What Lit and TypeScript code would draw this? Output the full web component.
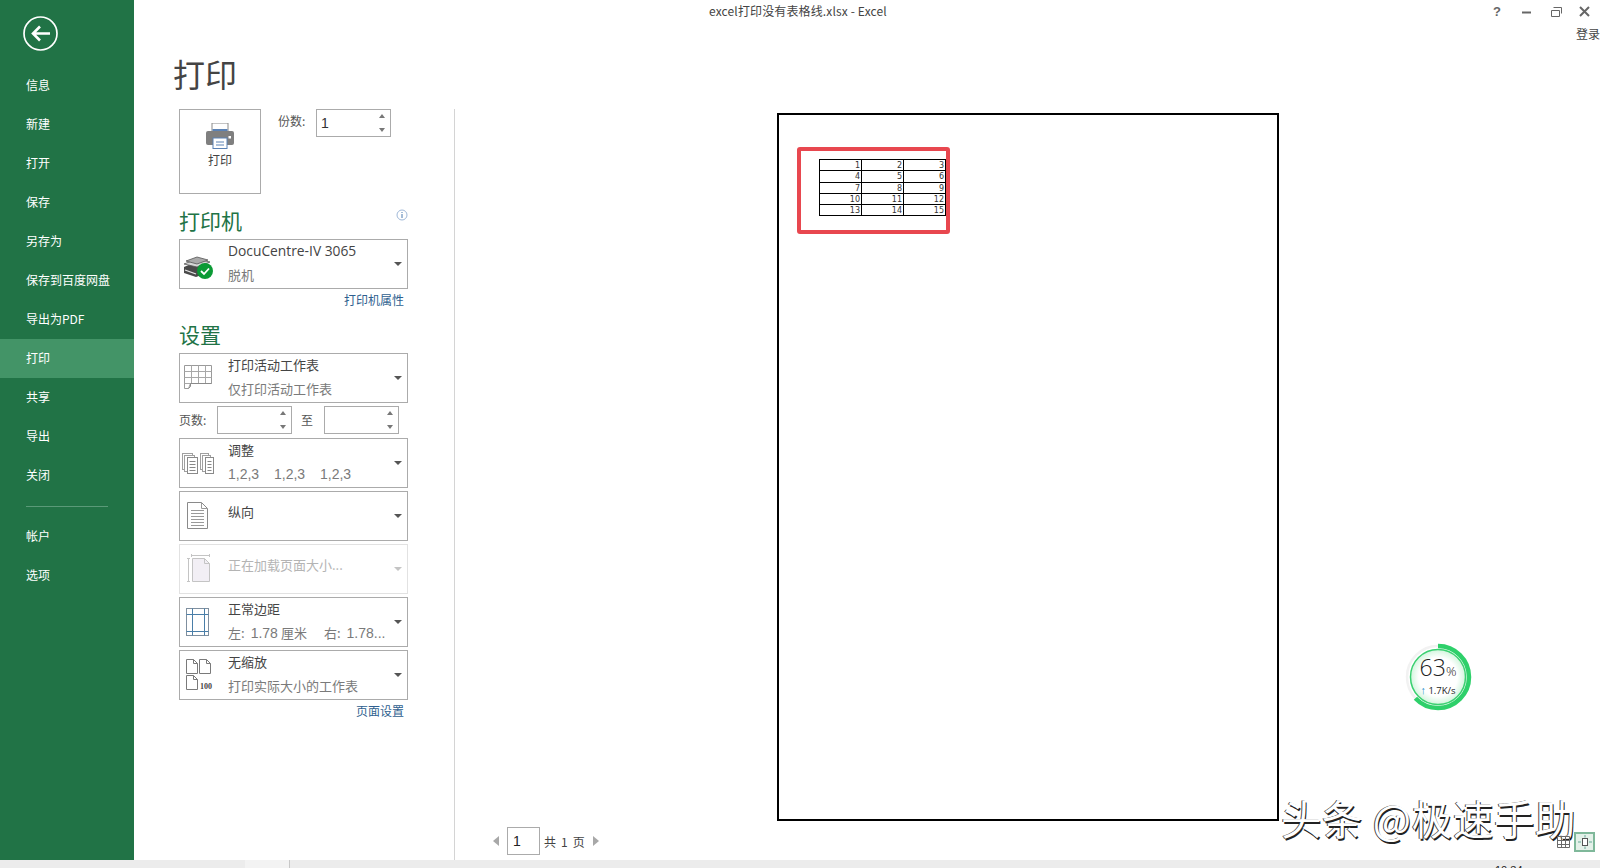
import { LitElement, html, css, svg, unsafeCSS } from "lit";
import { customElement } from "lit/decorators.js";

const cjk = unsafeCSS(`"Noto Sans CJK SC", sans-serif`);
const nav = ["信息", "新建", "打开", "保存", "另存为", "保存到百度网盘", "导出为PDF", "打印", "共享", "导出", "关闭"];
const cells = [[1, 2, 3], [4, 5, 6], [7, 8, 9], [10, 11, 12], [13, 14, 15]];

/* every row icon shares a 48x48 box anchored at the inside top-left of its row */
const box = (c: unknown) => svg`<svg class="ico" width="48" height="48" viewBox="0 0 48 48" fill="none">${c}</svg>`;

const printerIcon = box(svg`
  <path d="M4 27l12-5 14 3v7l-14 5-12-4z" fill="#4a4a4a"/>
  <path d="M4 24l13-5 13 3-13 5z" fill="#d6d6d6" stroke="#555" stroke-width=".8"/>
  <path d="M6 21l11-4 11 3-11 4z" fill="#a9a9a9" stroke="#555" stroke-width=".8"/>
  <path d="M5 30l11 4" stroke="#e6e6e6" stroke-width="1.300"/>
  <circle cx="25" cy="31" r="8" fill="#0b9a35"/>
  <path d="M21 31l3 3 5-5.500" stroke="#fff" stroke-width="1.800"/>`);
const sheetIcon = box(svg`
  <path d="M4.500 11.500h27v18h-21l-2 5h-4z" stroke="#9a9a9a" fill="#fff"/>
  <path d="M4.500 17.500h27M4.500 23.500h27M4.500 29.500h6M11.500 11.500v18M18.500 11.500v18M25.500 11.500v18" stroke="#a8a8a8"/>
  <path d="M10.500 29.500h21M10.500 29.500v3l-2 2" stroke="#8a8a8a"/>`);
const stack = (x: number, w: number) => svg`
  <rect x="${x + 0.5}" y="14.500" width="${w}" height="16" stroke="#a0a0a0" fill="#fff"/>
  <rect x="${x + 2.5}" y="16.500" width="${w}" height="16" stroke="#a0a0a0" fill="#fff"/>
  <rect x="${x + 5.5}" y="18.500" width="${w}" height="16" stroke="#8a8a8a" fill="#fff"/>
  <path d="M${x + 7.5} 22.500h${w - 4}M${x + 7.5} 25.500h${w - 4}M${x + 7.5} 28.500h${w - 4}M${x + 7.5} 31.500h${w - 4}" stroke="#888"/>`;
const collateIcon = box(svg`${stack(2, 10)}${stack(20, 8)}`);
const pageIcon = box(svg`
  <path d="M7.500 10.500h14l6 6v20h-20z" stroke="#8a8a8a" fill="#fff"/>
  <path d="M21.500 10.500v6h6M11 18.500h13M11 21.500h13M11 24.500h13M11 27.500h13M11 30.500h13M11 33.500h13" stroke="#9a9a9a"/>`);
const sizeIcon = box(svg`
  <path d="M11.500 9v3M11.500 10.500h18M29.500 9v3M7 13.500h3M8.500 13.500v23M7 36.500h3" stroke="#c4c4c4"/>
  <path d="M12.500 13.500h12l5 5v18h-17z" stroke="#c4c4c4" fill="#f2eff5"/>
  <path d="M24.500 13.500v5h5" stroke="#c4c4c4"/>`);
const marginIcon = box(svg`
  <rect x="6.500" y="10.500" width="22" height="27" stroke="#7f8f9f"/>
  <path d="M12.500 10.500v27M24.500 10.500v27M6.500 16.500h22M6.500 33.500h22" stroke="#4a7ea8"/>`);
const scaleIcon = box(svg`
  <path d="M6.500 8.500h7l4 4v10h-11zM13.500 8.500v4h4M19.500 8.500h7l4 4v10h-11zM26.500 8.500v4h4M6.500 24.500h7l4 4v10h-11zM13.500 24.500v4h4" stroke="#7a7a7a" fill="#fff"/>
  <text x="20" y="38" font-family="Liberation Serif" font-weight="700" font-size="8" fill="#444">100</text>`);

const marginLine = html`左: <b>1.78</b> 厘米 <i class="g"></i>右: <b>1.78...</b>`;
const rows = [
  { icon: sheetIcon, a: "打印活动工作表", b: "仅打印活动工作表" },
  "spin",
  { icon: collateIcon, a: "调整", collate: true },
  { icon: pageIcon, a: "纵向", single: true },
  { icon: sizeIcon, a: "正在加载页面大小...", single: true, off: true },
  { icon: marginIcon, a: "正常边距", b: marginLine },
  { icon: scaleIcon, a: "无缩放", b: "打印实际大小的工作表" },
] as any[];

@customElement("app-root")
export class AppRoot extends LitElement {
  static styles = css`
    :host { display: block; width: 1600px; height: 868px; overflow: hidden; position: relative; background: #fff; font-family: ${cjk}; color: #444; }
    .win { display: flex; flex-direction: column; height: 868px; }
    .body { display: flex; height: 860px; }
    .side { width: 134px; flex: none; background: #217346; color: #fff; font-size: 12px; display: flex; flex-direction: column; }
    .back { height: 66px; display: flex; align-items: flex-start; padding: 16px 0 0 23px; box-sizing: border-box; }
    .nav { height: 39px; line-height: 37px; padding-left: 26px; }
    .nav.on { background: #439467; }
    .sep { height: 1px; background: #5a9a78; margin: 11px 26px 10px 26px; width: 82px; }
    .main { flex: 1; display: flex; flex-direction: column; min-width: 0; }
    .chrome { height: 50px; display: flex; justify-content: space-between; padding-left: 575px; font-size: 12px; line-height: 22px; color: #444; letter-spacing: .14px; }
    .ctl { display: flex; flex-direction: column; align-items: flex-end; }
    .btns { display: block; height: 24px; }
    .login { font-size: 12px; line-height: 20px; color: #444; width: 24px; white-space: nowrap; letter-spacing: 0; }
    h1 { margin: 0 0 0 39px; height: 59px; font-size: 32px; line-height: 46px; font-weight: 400; color: #444; }
    .row { display: flex; flex: 1; min-height: 0; }
    .panel { width: 275px; margin-left: 45px; border-right: 1px solid #d4d4d4; flex: none; }
    .top { display: flex; align-items: flex-start; }
    .pbtn { width: 82px; height: 85px; box-sizing: border-box; border: 1px solid #ababab; display: flex; flex-direction: column; align-items: center; padding-top: 13px; font-size: 12px; line-height: 14px; color: #444; }
    .pbtn span { margin-top: 4px; }
    .lab { font-size: 12px; color: #555; }
    .top .lab { margin: 2px 0 0 17px; width: 38px; line-height: 20px; }
    .spin { border: 1px solid #ababab; box-sizing: border-box; width: 75px; height: 28px; position: relative; font-size: 14px; line-height: 26px; padding-left: 4px; color: #333; font-family: "Liberation Sans", sans-serif; }
    .up, .dn { position: absolute; right: 5px; width: 0; height: 0; border-left: 3.500px solid transparent; border-right: 3.500px solid transparent; }
    .up { top: 4px; border-bottom: 4px solid #777; }
    .dn { bottom: 4px; border-top: 4px solid #777; }
    h2 { margin: 0; font-size: 21px; font-weight: 400; color: #217346; line-height: 28px; }
    .ph { display: flex; justify-content: space-between; align-items: flex-start; width: 229px; margin-top: 12px; height: 33px; }
    .drop { width: 229px; height: 50px; box-sizing: border-box; border: 1px solid #ababab; display: flex; align-items: center; margin-bottom: 3px; position: relative; }
    .ic { width: 48px; height: 48px; flex: none; }
    .ico { display: block; }
    .tx { flex: 1; font-size: 13px; line-height: 24px; color: #444; white-space: nowrap; padding-bottom: 3px; }
    .tx .sub { color: #7a7a7a; display: flex; align-items: baseline; }
    .tx .sub .n { width: 46px; font-family: "Liberation Sans", sans-serif; font-size: 14px; flex: none; }
    .tx .sub b { font: 14px "Liberation Sans", sans-serif; margin: 0 3px 0 6px; }
    .tx .sub .g { width: 17px; }
    .single { margin-top: -5px; }
    .arrow { position: absolute; right: 5px; top: 22px; width: 0; height: 0; border-left: 4px solid transparent; border-right: 4px solid transparent; border-top: 4px solid #555; }
    .off { border-color: #e2e2e2; }
    .off .tx { color: #b4b4b4; }
    .off .arrow { border-top-color: #c4c4c4; }
    .doc { font-family: "Open Sans", sans-serif; font-size: 13.800px; }
    .link { width: 225px; text-align: right; font-size: 12px; color: #2f5f8f; line-height: 24px; }
    .plink { margin-top: -4px; height: 24px; }
    .endlink { margin-top: -4px; }
    .h2b { margin-top: 8px; height: 28px; margin-bottom: 5px; }
    .pages { display: flex; align-items: center; height: 28px; width: 229px; margin-bottom: 4px; margin-top: 1px; }
    .pages .lab { width: 38px; margin-top: -2px; }
    .pages .mid { width: 32px; text-align: center; padding-right: 2px; box-sizing: border-box; }
    .prev { flex: 1; min-width: 0; padding-top: 4px; position: relative; }
    .page { margin-left: 322px; width: 502px; height: 708px; box-sizing: border-box; border: 2px solid #000; padding: 32px 0 0 18px; }
    .mark { width: 153px; height: 87px; box-sizing: border-box; border: 4px solid #e8474f; border-radius: 3px; padding: 8px 0 0 18px; }
    table { border-collapse: collapse; width: 127px; font: 8px/9px "DejaVu Sans", sans-serif; color: #333; }
    td { border: 1px solid #000; text-align: right; height: 11.300px; padding: 1px 1px 0; box-sizing: border-box; width: 42px; vertical-align: middle; }
    .pager { margin: 6px 0 0 38px; display: flex; align-items: center; height: 28px; font-size: 12px; color: #444; word-spacing: 1.500px; letter-spacing: .4px; }
    .pn { width: 33px; height: 28px; box-sizing: border-box; border: 1px solid #ababab; padding-left: 5px; font: 14px/26px "Liberation Sans", sans-serif; color: #222; margin: 0 4px 0 8px; }
    .tri { width: 0; height: 0; border-top: 5px solid transparent; border-bottom: 5px solid transparent; }
    .tri.l { border-right: 6px solid #a8a8a8; }
    .tri.r { border-left: 6px solid #a8a8a8; margin-left: 8px; }
    .status { height: 8px; background: #ececec; position: relative; overflow: hidden; display: flex; }
    .tab { margin-left: 245px; width: 44px; background: #f3f3f3; border-right: 1px solid #c8c8c8; }
    .clock { position: absolute; left: 1495px; top: 3px; font: 11px/14px "Liberation Sans", sans-serif; color: #222; }
    .mk { position: absolute; left: 1281px; top: 793px; font-size: 40.500px; letter-spacing: .6px; line-height: 50px; color: #fff; text-shadow: 1px 2px 0 #222, -1px 0 0 #444; white-space: nowrap; }
    .view { position: absolute; display: flex; align-items: center; left: 1557px; top: 832px; }
    .cur { width: 21px; height: 20px; box-sizing: border-box; background: #e4f1e9; border: 2.500px solid #7fb89a; display: flex; align-items: center; justify-content: center; margin-left: 4px; }
    .speed { position: absolute; left: 1400px; top: 639px; width: 76px; height: 76px; }
    .spd { position: absolute; inset: 0; display: flex; flex-direction: column; align-items: center; font-family: "Open Sans", sans-serif; color: #222; padding-top: 15px; box-sizing: border-box; }
    .big { font-size: 23px; line-height: 26px; font-weight: 300; }
    .big small { font-size: 13px; }
    .kb { font-size: 9.500px; line-height: 12px; }
    .kb b { color: #2a8fd0; font-weight: 700; font-size: 11px; }
  `;

  private renderRow(r: any) {
    if (r === "spin") {
      return html`<div class="pages"><span class="lab">页数:</span><div class="spin"><i class="up"></i><i class="dn"></i></div><span class="lab mid">至</span><div class="spin"><i class="up"></i><i class="dn"></i></div></div>`;
    }
    return html`<div class="drop ${r.off ? "off" : ""}">
      <div class="ic">${r.icon}</div>
      <div class="tx ${r.single ? "single" : ""}">
        <div>${r.a}</div>
        ${r.collate
          ? html`<div class="sub"><span class="n">1,2,3</span><span class="n">1,2,3</span><span class="n">1,2,3</span></div>`
          : r.b ? html`<div class="sub">${r.b}</div>` : ""}
      </div>
      <i class="arrow"></i>
    </div>`;
  }

  render() {
    return html`<div class="win">
      <div class="body">
        <div class="side">
          <div class="back"><svg width="35" height="35" viewBox="0 0 35 35" fill="none" stroke="#fff"><circle cx="17.500" cy="17.500" r="16.500" stroke-width="1.700"/><path d="M27 17.500H10M17 10.500l-7 7 7 7" stroke-width="2.600"/></svg></div>
          ${nav.map((n) => html`<div class="nav ${n === "打印" ? "on" : ""}">${n}</div>`)}
          <div class="sep"></div>
          <div class="nav">帐户</div>
          <div class="nav">选项</div>
        </div>
        <div class="main">
          <div class="chrome">
            <span>excel打印没有表格线.xlsx - Excel</span>
            <div class="ctl">
              <svg class="btns" width="110" height="24" viewBox="0 0 110 24" fill="none" stroke="#666">
                <text x="3" y="16" font-family="Liberation Sans" font-weight="700" font-size="13" fill="#666" stroke="none">?</text>
                <path d="M32 12.500h9" stroke-width="2"/>
                <path d="M61.500 10.500h8v6h-8zM63.500 7.500h8v6" />
                <path d="M90 7l9 9M99 7l-9 9" stroke-width="2"/>
              </svg>
              <div class="login">登录</div>
            </div>
          </div>
          <h1>打印</h1>
          <div class="row">
            <div class="panel">
              <div class="top">
                <div class="pbtn">
                  <svg width="28" height="26" viewBox="0 0 28 26"><rect x="6" y="0" width="16" height="10" fill="#fff" stroke="#8a8a8a"/><rect x="6.500" y="6" width="15" height="4" fill="#5b82b5"/><path d="M2 8h24q2 0 2 2v10q0 2-2 2H2q-2 0-2-2V10q0-2 2-2z" fill="#7f7f7f"/><rect x="22.500" y="13" width="2.500" height="2.500" fill="#fff"/><rect x="7" y="15" width="14" height="10.500" fill="#fff" stroke="#5b82b5"/><path d="M10 19h8M10 22h8" stroke="#5b82b5"/></svg>
                  <span>打印</span>
                </div>
                <span class="lab">份数:</span>
                <div class="spin">1<i class="up"></i><i class="dn"></i></div>
              </div>
              <div class="ph"><h2>打印机</h2>
                <svg width="12" height="12" viewBox="0 0 12 12" style="margin:3px 0 0 0" fill="none"><circle cx="6" cy="6" r="5" stroke="#9fb8d8"/><path d="M6 3v1M6 5v4" stroke="#4a7ab0"/></svg>
              </div>
              <div class="drop">
                <div class="ic">${printerIcon}</div>
                <div class="tx"><div class="doc">DocuCentre-IV 3065</div><div class="sub">脱机</div></div>
                <i class="arrow"></i>
              </div>
              <div class="link plink">打印机属性</div>
              <h2 class="h2b">设置</h2>
              ${rows.map((r) => this.renderRow(r))}
              <div class="link endlink">页面设置</div>
            </div>
            <div class="prev">
              <div class="page">
                <div class="mark">
                  <table>${cells.map((r) => html`<tr>${r.map((c) => html`<td>${c}</td>`)}</tr>`)}</table>
                </div>
              </div>
              <div class="pager"><i class="tri l"></i><div class="pn">1</div><span>共 1 页</span><i class="tri r"></i></div>
            </div>
          </div>
        </div>
      </div>
      <div class="status"><div class="tab"></div><span class="clock">10:34</span></div>
    </div>
    <div class="speed">
      <svg width="76" height="76" viewBox="0 0 76 76" fill="none">
        <defs><radialGradient id="g"><stop offset="0" stop-color="#fff"/><stop offset=".7" stop-color="#fff"/><stop offset="1" stop-color="#d2f5dd"/></radialGradient></defs>
        <circle cx="38" cy="38" r="27.500" fill="url(#g)" stroke="#3ad070" stroke-width="1.500"/>
        <circle cx="38" cy="38" r="31" stroke="#f2f2f2" stroke-width="2.500"/>
        <circle cx="38" cy="38" r="31" stroke="#2ed06a" stroke-width="4.500" pathLength="100" stroke-dasharray="63 37" transform="rotate(-90 38 38)"/>
      </svg>
      <div class="spd"><div class="big">63<small>%</small></div><div class="kb"><b>↑</b> 1.7K/s</div></div>
    </div>
    <div class="mk">头条 @极速手助</div>
    <div class="view">
      <svg width="13" height="12" viewBox="0 0 13 12" fill="none" stroke="#6a6a6a"><path d="M.5 .5h12v11H.5zM.5 4.500h12M.5 8.500h12M4.500 .5v11M8.500 .5v11"/></svg>
      <div class="cur"><svg width="16" height="14" viewBox="0 0 16 14" fill="none" stroke="#555"><rect x="5.500" y="3.500" width="5" height="7" fill="#fff"/><path d="M1 7h3M12 7h3M8 0v2.500M8 11.500v2.500" stroke="#6a9"/></svg></div>
    </div>`;
  }
}
